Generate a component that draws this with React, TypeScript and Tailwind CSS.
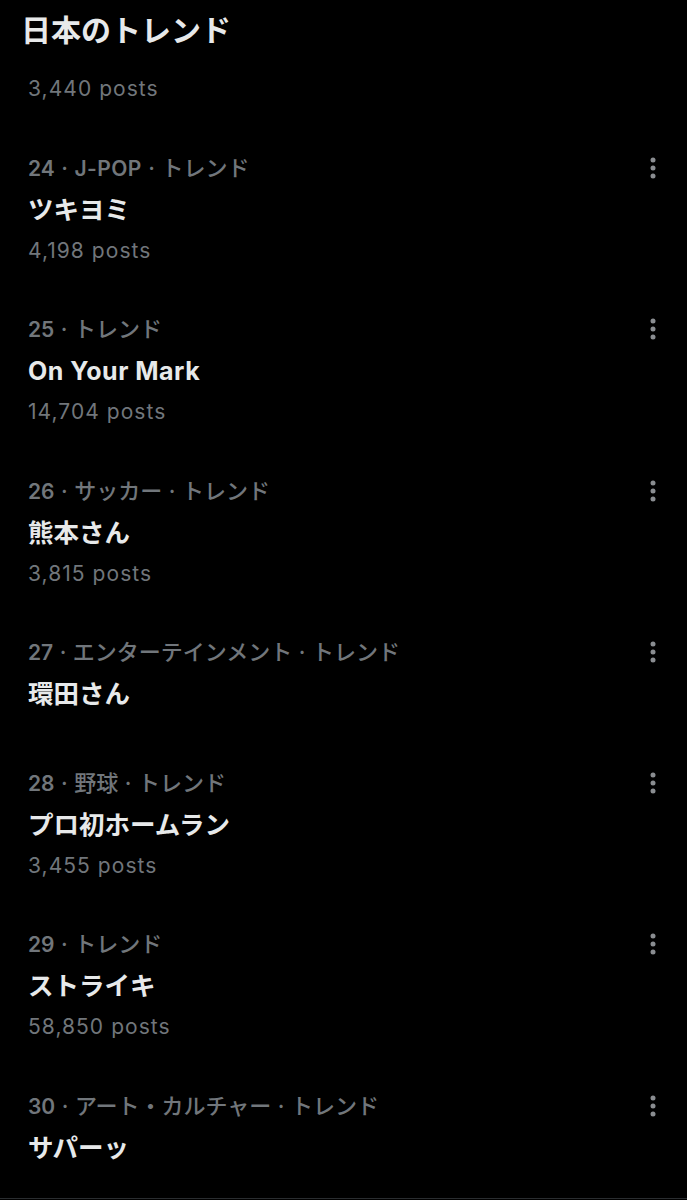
const font = {
  fontFamily: '"Inter", "Noto Sans CJK JP", sans-serif',
};

type Trend = {
  rank: number;
  category: string[];
  title: string;
  posts?: string;
};

const trends: Trend[] = [
  { rank: 24, category: ["J-POP", "トレンド"], title: "ツキヨミ", posts: "4,198 posts" },
  { rank: 25, category: ["トレンド"], title: "On Your Mark", posts: "14,704 posts" },
  { rank: 26, category: ["サッカー", "トレンド"], title: "熊本さん", posts: "3,815 posts" },
  { rank: 27, category: ["エンターテインメント", "トレンド"], title: "環田さん" },
  { rank: 28, category: ["野球", "トレンド"], title: "プロ初ホームラン", posts: "3,455 posts" },
  { rank: 29, category: ["トレンド"], title: "ストライキ", posts: "58,850 posts" },
  { rank: 30, category: ["アート・カルチャー", "トレンド"], title: "サパーッ" },
];

const isCjk = (s: string) => /[\u3000-\u9fff\uff00-\uffef]/.test(s);

const MoreIcon = () => (
  <svg width="6" height="22" viewBox="0 0 6 22" className="text-[#8a8d91]">
    <circle cx="3" cy="3" r="2.5" fill="currentColor" />
    <circle cx="3" cy="11" r="2.5" fill="currentColor" />
    <circle cx="3" cy="19" r="2.5" fill="currentColor" />
  </svg>
);

const Dot = () => <span className="mx-[6.5px]">·</span>;

const TrendRow = ({ trend }: { trend: Trend }) => (
  <div
    className={
      trend.posts
        ? "relative pl-[28px] pr-[30px] pt-[24px] pb-[23.5px]"
        : "relative pl-[28px] pr-[30px] pt-[24px] pb-[22.5px]"
    }
  >
    <div className="h-[32px] overflow-visible text-[22px] leading-[32px] text-[#71767b] font-medium whitespace-nowrap">
      <span className="font-semibold text-[21px]">{trend.rank}</span>
      {trend.category.map((c) => (
        <span key={c}>
          <Dot />
          {isCjk(c) ? (
            <span>{c}</span>
          ) : (
            <span className="font-semibold text-[21px] tracking-[0.02em]">{c}</span>
          )}
        </span>
      ))}
    </div>
    <div
      className={
        isCjk(trend.title)
          ? "h-[52px] text-[25.5px] leading-[52px] font-bold text-[#e7e9ea]"
          : "h-[52px] text-[25px] leading-[52px] font-bold text-[#e7e9ea] tracking-[0.02em]"
      }
    >
      {trend.title}
    </div>
    {trend.posts && (
      <div className="h-[30px] text-[21px] leading-[30px] text-[#71767b] tracking-[0.05em]">
        {trend.posts}
      </div>
    )}
    <div className="absolute right-[31px] top-[29px]">
      <MoreIcon />
    </div>
  </div>
);

export default function App() {
  return (
    <div className="h-[1200px] w-full overflow-hidden bg-black" style={font}>
      <div className="h-[60px] pl-[21px] flex items-center">
        <h1 className="text-[30px] font-bold text-[#e7e9ea]">日本のトレンド</h1>
      </div>
      <div className="pl-[28px] pt-[14px] pb-[23.5px] text-[21px] leading-[30px] text-[#71767b] tracking-[0.05em]">
        3,440 posts
      </div>
      {trends.map((t) => (
        <TrendRow key={t.rank} trend={t} />
      ))}
      <div className="mt-[2px] border-t border-[#2a2d30]" />
    </div>
  );
}
